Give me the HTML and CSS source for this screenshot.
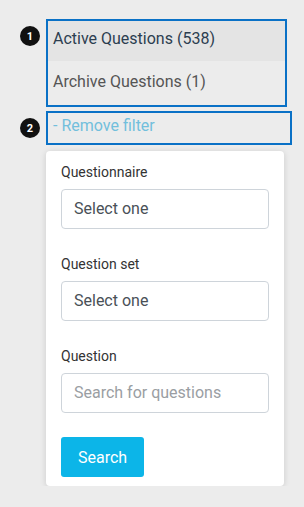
FILE: index.html
```html
<!DOCTYPE html>
<html lang="en">
<head>
    <meta charset="UTF-8">
    <meta name="viewport" content="width=device-width, initial-scale=1.0">
    <title>Questions</title>
    <link rel="stylesheet" href="styles.css">
</head>
<body>
    <div class="page">
        <div class="annot">
            <span class="badge badge-first">1</span>
            <div class="box tabs">
                <div class="tab active">Active Questions (538)</div>
                <div class="tab archive">Archive Questions (1)</div>
            </div>
        </div>

        <div class="annot">
            <span class="badge badge-second">2</span>
            <div class="box filter">- Remove filter</div>
        </div>

        <div class="card">
            <div class="form-group">
                <label class="label">Questionnaire</label>
                <div class="control">Select one</div>
            </div>
            <div class="form-group">
                <label class="label">Question set</label>
                <div class="control">Select one</div>
            </div>
            <div class="form-group">
                <label class="label">Question</label>
                <div class="control placeholder">Search for questions</div>
            </div>
            <button class="btn">Search</button>
        </div>
    </div>
</body>
</html>
```

FILE: styles.css
```css
:root {
    --page-bg: #ececec;
    --outline: #0a71c6;
    --row-shade: #e4e4e4;
    --text-dark: #333333;
    --input-text: #495057;
    --input-border: #ced4da;
    --accent: #0cb5e8;
}

body {
    margin: 0;
    background: var(--page-bg);
    font-family: Roboto, "Liberation Sans", sans-serif;
    color: var(--text-dark);
}

.page {
    padding: 19px 0 0 20px;
}

.annot {
    display: flex;
    gap: 6px;
    align-items: flex-start;
}

.badge {
    width: 20px;
    height: 20px;
    border-radius: 50%;
    background: #111;
    color: #fff;
    font-size: 11px;
    font-weight: 700;
    display: flex;
    justify-content: center;
    align-items: center;
    flex-shrink: 0;
}

.badge-first { margin-top: 7px; }
.badge-second { margin-top: 7px; }

.box {
    width: 237px;
    border: 2px solid var(--outline);
}

.tabs {
    margin-bottom: 4px;
}

.tab {
    font-size: 16px;
    line-height: 24px;
    padding-left: 5px;
}

.tab.active {
    background: var(--row-shade);
    color: #2c3e50;
    padding-top: 6px;
    padding-bottom: 10px;
}

.tab.archive {
    color: #555;
    padding-top: 9px;
    padding-bottom: 11px;
}

.filter {
    font-size: 16px;
    line-height: 24px;
    padding: 1px 0 5px 5px;
    color: #72bfdc;
}

.card {
    margin: 6px 0 0 26px;
    width: 208px;
    background: #fff;
    border-radius: 4px;
    box-shadow: 0 1px 6px rgba(0, 0, 0, 0.14);
    padding: 11px 15px 9px;
}

.form-group {
    margin-bottom: 25px;
}

.form-group:last-of-type {
    margin-bottom: 24px;
}

.label {
    display: block;
    font-size: 14px;
    line-height: 21px;
    margin-bottom: 6px;
    color: var(--text-dark);
}

.control {
    height: 38px;
    border: 1px solid var(--input-border);
    border-radius: 4px;
    padding: 0 12px;
    font-size: 16px;
    line-height: 38px;
    color: var(--input-text);
}

.control.placeholder {
    color: #9a9ea3;
}

.btn {
    display: block;
    height: 40px;
    padding: 0 17px;
    border: none;
    border-radius: 3px;
    background: var(--accent);
    color: #fff;
    font-family: inherit;
    font-size: 16px;
}
```
